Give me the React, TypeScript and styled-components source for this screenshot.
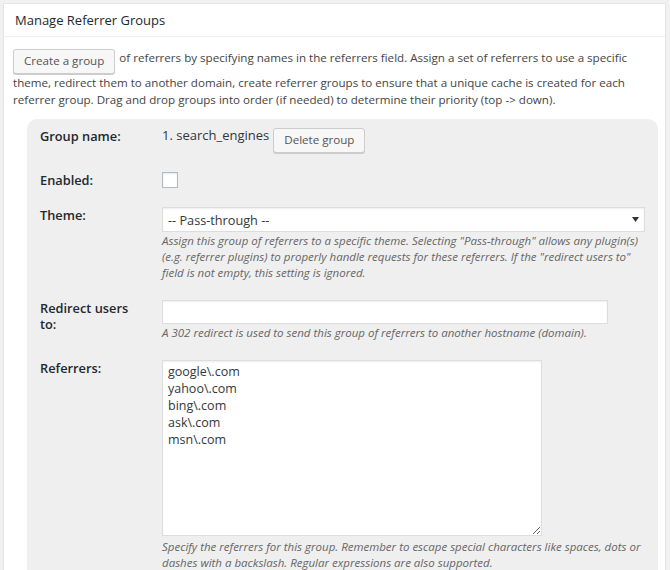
import React from "react";
import styled, { createGlobalStyle } from "styled-components";

const Global = createGlobalStyle`
  html, body { margin: 0; padding: 0; }
  body {
    background: #f1f1f1;
    font-family: "Open Sans", "Liberation Sans", sans-serif;
    font-size: 11.6px;
    color: #444;
  }
`;

const Panel = styled.div`
  margin: 3px 4px 0 3px;
  background: #fff;
  border: 1px solid #e5e5e5;
  box-shadow: 0 1px 1px rgba(0, 0, 0, 0.04);
  min-height: 580px;
`;

const Header = styled.h2`
  margin: 0;
  height: 32px;
  line-height: 32px;
  padding: 0 11px;
  font-size: 13px;
  font-weight: 500;
  color: #23282d;
  border-bottom: 1px solid #eee;
`;

const Body = styled.div`
  padding: 12px 7px 0 9px;
`;

const Intro = styled.p`
  margin: 0;
  font-size: 11.6px;
  line-height: 17px;
  color: #444;
`;

const Button = styled.button`
  display: inline-block;
  height: 25px;
  margin: 0 1px 0 0;
  padding: 0 10px 1px;
  font-family: "Open Sans", "Liberation Sans", sans-serif;
  font-size: 11.6px;
  line-height: 22px;
  color: #555;
  background: #f7f7f7;
  border: 1px solid #ccc;
  border-radius: 3px;
  box-shadow: 0 1px 0 #ccc;
  vertical-align: top;
  cursor: pointer;
`;

const GroupBox = styled.div`
  margin: 11px 0 0 14px;
  background: #efefef;
  border-radius: 10px 10px 0 0;
  padding: 9px 8px 20px 13px;
  display: grid;
  grid-template-columns: 122px 1fr;
  row-gap: 19px;
`;

const Label = styled.div`
  font-weight: 600;
  font-size: 12.8px;
  line-height: 16px;
  color: #23282d;
  width: 100px;
`;

const Field = styled.div`
  display: flex;
  flex-direction: column;
  align-items: flex-start;
`;

const NameLine = styled.div`
  display: flex;
  align-items: flex-start;
  gap: 4px;
`;

const NameValue = styled.span`
  font-size: 13px;
  line-height: 15px;
  color: #32373c;
`;

const Check = styled.span`
  display: block;
  width: 14px;
  height: 14px;
  background: #fff;
  border: 1px solid #b4b9be;
  box-shadow: inset 0 1px 2px rgba(0, 0, 0, 0.1);
`;

const SelectWrap = styled.div`
  position: relative;
  width: 483px;
`;

const Select = styled.select`
  appearance: none;
  -webkit-appearance: none;
  display: block;
  width: 100%;
  height: 25px;
  margin: 0;
  padding: 0 5px;
  font-family: "Open Sans", "Liberation Sans", sans-serif;
  font-size: 12.7px;
  color: #32373c;
  background: #fff;
  border: 1px solid #ddd;
  border-radius: 0;
  box-shadow: inset 0 1px 2px rgba(0, 0, 0, 0.07);
  outline: none;
`;

const Arrow = styled.svg`
  position: absolute;
  right: 6px;
  top: 10px;
  pointer-events: none;
`;

const Description = styled.p<{ $gap?: number }>`
  margin: ${(p) => p.$gap ?? 1}px 0 0;
  font-size: 11.5px;
  font-style: italic;
  line-height: 16px;
  color: #666;
`;

const TextInput = styled.input`
  display: block;
  width: 446px;
  height: 24px;
  margin: 0;
  padding: 0 5px;
  box-sizing: border-box;
  font-family: "Open Sans", "Liberation Sans", sans-serif;
  font-size: 12.7px;
  background: #fff;
  border: 1px solid #ddd;
  box-shadow: inset 0 1px 2px rgba(0, 0, 0, 0.07);
  outline: none;
`;

const TextArea = styled.textarea`
  display: block;
  width: 380px;
  height: 176px;
  margin: 0;
  padding: 2px 5px;
  box-sizing: border-box;
  font-family: "Open Sans", "Liberation Sans", sans-serif;
  font-size: 12.5px;
  line-height: 17px;
  color: #32373c;
  background: #fff;
  border: 1px solid #ddd;
  box-shadow: inset 0 1px 2px rgba(0, 0, 0, 0.07);
  outline: none;
`;

const referrers = ["google\\.com", "yahoo\\.com", "bing\\.com", "ask\\.com", "msn\\.com"].join("\n");

export default function App() {
  return (
    <>
      <Global />
      <Panel>
        <Header>Manage Referrer Groups</Header>
        <Body>
          <Intro>
            <Button type="button">Create a group</Button> of referrers by specifying names in the referrers
            field. Assign a set of referrers to use a specific theme, redirect them to another domain, create
            referrer groups to ensure that a unique cache is created for each referrer group. Drag and drop
            groups into order (if needed) to determine their priority (top -&gt; down).
          </Intro>
          <GroupBox>
            <Label>Group name:</Label>
            <Field>
              <NameLine>
                <NameValue>1. search_engines</NameValue>
                <Button type="button">Delete group</Button>
              </NameLine>
            </Field>

            <Label>Enabled:</Label>
            <Field>
              <Check />
            </Field>

            <Label>Theme:</Label>
            <Field>
              <SelectWrap>
                <Select defaultValue="pass">
                  <option value="pass">-- Pass-through --</option>
                </Select>
                <Arrow width="7" height="5" viewBox="0 0 7 5">
                  <path d="M0 0 H7 L3.5 5 Z" fill="#333" />
                </Arrow>
              </SelectWrap>
              <Description>
                Assign this group of referrers to a specific theme. Selecting "Pass-through" allows any plugin(s)
                (e.g. referrer plugins) to properly handle requests for these referrers. If the "redirect users to"
                field is not empty, this setting is ignored.
              </Description>
            </Field>

            <Label>Redirect users to:</Label>
            <Field>
              <TextInput type="text" defaultValue="" />
              <Description>
                A 302 redirect is used to send this group of referrers to another hostname (domain).
              </Description>
            </Field>

            <Label>Referrers:</Label>
            <Field>
              <TextArea defaultValue={referrers} />
              <Description $gap={3}>
                Specify the referrers for this group. Remember to escape special characters like spaces, dots or
                dashes with a backslash. Regular expressions are also supported.
              </Description>
            </Field>
          </GroupBox>
        </Body>
      </Panel>
    </>
  );
}
